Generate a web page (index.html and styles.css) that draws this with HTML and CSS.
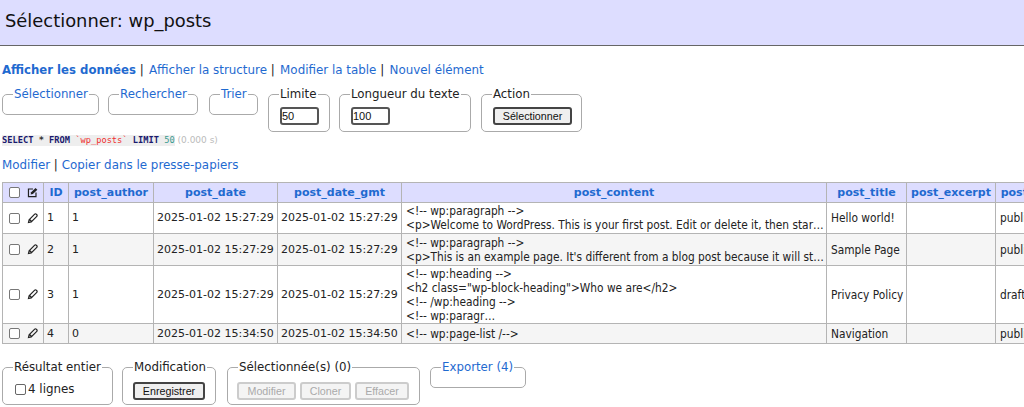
FILE: index.html
```html
<!DOCTYPE html>
<html lang="fr">
<head>
<meta charset="utf-8">
<title>Sélectionner: wp_posts</title>
<link rel="stylesheet" href="styles.css">
</head>
<body>
<h2 class="title">Sélectionner: wp_posts</h2>
<main class="content">
  <p class="nav"><a href="#" class="active">Afficher les données</a> | <a href="#">Afficher la structure</a> | <a href="#">Modifier la table</a> | <a href="#">Nouvel élément</a></p>
  <form class="filters">
    <fieldset class="fs fs-select"><legend><a href="#">Sélectionner</a></legend></fieldset>
    <fieldset class="fs fs-search"><legend><a href="#">Rechercher</a></legend></fieldset>
    <fieldset class="fs fs-sort"><legend><a href="#">Trier</a></legend></fieldset>
    <fieldset class="fs fs-limit"><legend>Limite</legend><input class="num" value="50"></fieldset>
    <fieldset class="fs fs-len"><legend>Longueur du texte</legend><input class="num" value="100"></fieldset>
    <fieldset class="fs fs-action"><legend>Action</legend><button type="button" class="btn">Sélectionner</button></fieldset>
  </form>
  <p class="sql"><code><b class="kw">SELECT</b> <b class="star">*</b> <b class="kw">FROM</b> <span class="str">`wp_posts`</span> <b class="kw">LIMIT</b> <span class="n">50</span></code> <span class="time">(0.000 s)</span></p>
  <p class="links"><a href="#">Modifier</a> | <a href="#">Copier dans le presse-papiers</a></p>
  <div class="scroll">
    <table class="data">
      <colgroup><col class="c-check"><col class="c-id"><col class="c-author"><col class="c-date"><col class="c-date"><col class="c-content"><col class="c-title"><col class="c-excerpt"><col class="c-status"></colgroup>
      <thead>
        <tr>
          <td class="actions"><span class="box"></span><svg class="ico" viewBox="0 0 12 12"><path d="M6.5 2.2H1.6v8.2h8.2V6" fill="none" stroke="#222" stroke-width="1.3"/><path d="M4 8.2l.5-2.4L9.3 1l2 1.9-4.9 4.8z" fill="#222"/></svg></td>
          <th><a href="#">ID</a></th><th><a href="#">post_author</a></th><th><a href="#">post_date</a></th><th><a href="#">post_date_gmt</a></th><th><a href="#">post_content</a></th><th><a href="#">post_title</a></th><th><a href="#">post_excerpt</a></th><th><a href="#">post_status</a></th>
        </tr>
      </thead>
      <tbody>
        <tr>
          <td class="actions"><span class="box"></span><svg class="ico" viewBox="0 0 12 12"><path d="M1.6 10.4l.7-3L8.4 1.3a1.2 1.2 0 0 1 1.7 0l.6.6a1.2 1.2 0 0 1 0 1.7L4.6 9.7zM3 7.2l1.8 1.8" fill="none" stroke="#222" stroke-width="1.3"/></svg></td>
          <td>1</td><td>1</td><td>2025-01-02 15:27:29</td><td>2025-01-02 15:27:29</td>
          <td class="text">&lt;!-- wp:paragraph --&gt;<br>&lt;p&gt;Welcome to WordPress. This is your first post. Edit or delete it, then star…</td>
          <td class="text">Hello world!</td><td></td><td class="text">publish</td>
        </tr>
        <tr class="odd">
          <td class="actions"><span class="box"></span><svg class="ico" viewBox="0 0 12 12"><path d="M1.6 10.4l.7-3L8.4 1.3a1.2 1.2 0 0 1 1.7 0l.6.6a1.2 1.2 0 0 1 0 1.7L4.6 9.7zM3 7.2l1.8 1.8" fill="none" stroke="#222" stroke-width="1.3"/></svg></td>
          <td>2</td><td>1</td><td>2025-01-02 15:27:29</td><td>2025-01-02 15:27:29</td>
          <td class="text">&lt;!-- wp:paragraph --&gt;<br>&lt;p&gt;This is an example page. It's different from a blog post because it will st…</td>
          <td class="text">Sample Page</td><td></td><td class="text">publish</td>
        </tr>
        <tr>
          <td class="actions"><span class="box"></span><svg class="ico" viewBox="0 0 12 12"><path d="M1.6 10.4l.7-3L8.4 1.3a1.2 1.2 0 0 1 1.7 0l.6.6a1.2 1.2 0 0 1 0 1.7L4.6 9.7zM3 7.2l1.8 1.8" fill="none" stroke="#222" stroke-width="1.3"/></svg></td>
          <td>3</td><td>1</td><td>2025-01-02 15:27:29</td><td>2025-01-02 15:27:29</td>
          <td class="text">&lt;!-- wp:heading --&gt;<br>&lt;h2 class="wp-block-heading"&gt;Who we are&lt;/h2&gt;<br>&lt;!-- /wp:heading --&gt;<br>&lt;!-- wp:paragr…</td>
          <td class="text">Privacy Policy</td><td></td><td class="text">draft</td>
        </tr>
        <tr class="odd">
          <td class="actions"><span class="box"></span><svg class="ico" viewBox="0 0 12 12"><path d="M1.6 10.4l.7-3L8.4 1.3a1.2 1.2 0 0 1 1.7 0l.6.6a1.2 1.2 0 0 1 0 1.7L4.6 9.7zM3 7.2l1.8 1.8" fill="none" stroke="#222" stroke-width="1.3"/></svg></td>
          <td>4</td><td>0</td><td>2025-01-02 15:34:50</td><td>2025-01-02 15:34:50</td>
          <td class="text">&lt;!-- wp:page-list /--&gt;</td>
          <td class="text">Navigation</td><td></td><td class="text">publish</td>
        </tr>
      </tbody>
    </table>
  </div>
  <div class="footer">
    <fieldset class="fs fs-all"><legend>Résultat entier</legend><label class="check"><span class="box box-sm"></span>4 lignes</label></fieldset>
    <fieldset class="fs fs-mod"><legend>Modification</legend><button type="button" class="btn">Enregistrer</button></fieldset>
    <fieldset class="fs fs-sel"><legend>Sélectionnée(s) (0)</legend><div class="btns"><button type="button" class="btn off">Modifier</button><button type="button" class="btn off">Cloner</button><button type="button" class="btn off">Effacer</button></div></fieldset>
    <fieldset class="fs fs-export"><legend><a href="#">Exporter (4)</a></legend></fieldset>
  </div>
</main>
</body>
</html>
```
FILE: styles.css
```css
* { box-sizing: border-box; }
html, body { margin: 0; height: 407px; overflow: hidden; }
body { font: 11.9px/15px "DejaVu Sans", sans-serif; color: #222; background: #fff; }
a { color: #1f6ad0; text-decoration: none; }
.title { margin: 0; height: 46px; padding: 0 5px; background: #ddf; border-bottom: 1px solid #666; font: 400 17.9px/42px "DejaVu Sans", sans-serif; color: #111; }
.content { padding: 0 2px; }
.nav { margin: 17px 0 0; line-height: 15px; }
.nav a:not(.active) { margin-left: 1.5px; }
.nav .active { font-weight: 700; font-size: 11.7px; }
.filters, .footer { display: flex; align-items: flex-start; }
.filters { margin-top: 9px; }
.fs { margin: 0; padding: 0 8px; border: 1px solid #aaa; border-radius: 5px; min-width: 0; }
.fs legend { padding: 0 1px; line-height: 14px; margin-left: 2px; font-size: 11.8px; }
.fs-select { width: 97px; height: 28px; margin-right: 9px; }
.fs-search { width: 90px; height: 28px; margin-right: 11px; }
.fs-sort { width: 49px; height: 28px; margin-right: 10px; }
.fs-limit { width: 62px; height: 45px; margin-right: 9px; }
.fs-len { width: 132px; height: 45px; margin-right: 10px; }
.fs-action { width: 101px; height: 45px; }
.num { display: block; width: 39px; height: 18px; margin: 6px 3px 0; padding: 0; border: 2px solid #555; border-radius: 3px; font: 11px "Liberation Sans", sans-serif; color: #111; background: #fff; }
.btn { display: block; width: 79px; height: 18px; padding: 0; margin: 6px 3px 0; border: 2px solid #444; border-radius: 3px; background: #efefef; font: 10.7px "Liberation Sans", sans-serif; color: #111; }
.btn.off { border-color: #ccc; color: #aaa; background: #f4f4f4; margin: 0; width: 59px; }
.sql { margin: 3px 0 0; font-size: 9px; line-height: 11px; color: #bbb; }
.sql code { font: 8.7px/11px "DejaVu Sans Mono", monospace; background: #eee; display: inline-block; }
.kw { color: #1a1a6e; }
.star { color: #333; }
.str { color: #f03030; }
.n { color: #3a9a90; }
.links { margin: 12px 0 0; line-height: 15px; }
.scroll { margin-top: 9px; overflow: hidden; margin-right: -2px; }
.data { border-collapse: collapse; table-layout: fixed; width: 1075px; font-size: 11px; line-height: 14px; }
.c-check { width: 41px; } .c-id { width: 25px; } .c-author { width: 85px; } .c-date { width: 124px; } .c-content { width: 425px; } .c-title { width: 80px; } .c-excerpt { width: 89px; } .c-status { width: 82px; }
.data th, .data td { border: 1px solid #b4b4b4; padding: 0 3px; vertical-align: middle; white-space: nowrap; overflow: hidden; }
.data thead td, .data th { background: #ddf; height: 20px; font-weight: 700; text-align: center; }
.data tbody td { height: 31px; }
.data tbody tr:nth-child(2) td { height: 32px; }
.data tbody tr:nth-child(3) td { height: 58px; }
.data tbody tr:last-child td { height: 20px; }
.data tbody .odd td { background: #f5f5f5; }
.data td.actions { padding: 0 0 0 6px; text-align: left; }
.data td.text { font-family: "DejaVu Sans Condensed", "DejaVu Sans", sans-serif; font-stretch: condensed; font-size: 11.8px; padding-left: 4px; }
.box { display: inline-block; width: 11px; height: 11px; border: 1px solid #777; border-radius: 2px; background: #fff; vertical-align: middle; }
.ico { width: 11px; height: 11px; margin-left: 7px; vertical-align: middle; }
.footer { margin-top: 16px; }
.fs-all { width: 111px; height: 45px; margin-right: 9px; }
.fs-mod { width: 94px; height: 45px; margin-right: 11px; }
.fs-sel { width: 193px; height: 45px; margin-right: 10px; }
.fs-export { width: 96px; height: 28px; }
.fs-mod .btn { margin-top: 8px; margin-left: 2px; width: 72px; }
.check { display: flex; align-items: center; margin-top: 8px; padding-left: 4px; gap: 2px; }
.box-sm { border-color: #666; }
.btns { display: flex; gap: 4px; margin: 8px 0 0 1px; }
.btns .btn:nth-child(2) { width: 51px; }
.btns .btn:nth-child(3) { width: 54px; }
```
